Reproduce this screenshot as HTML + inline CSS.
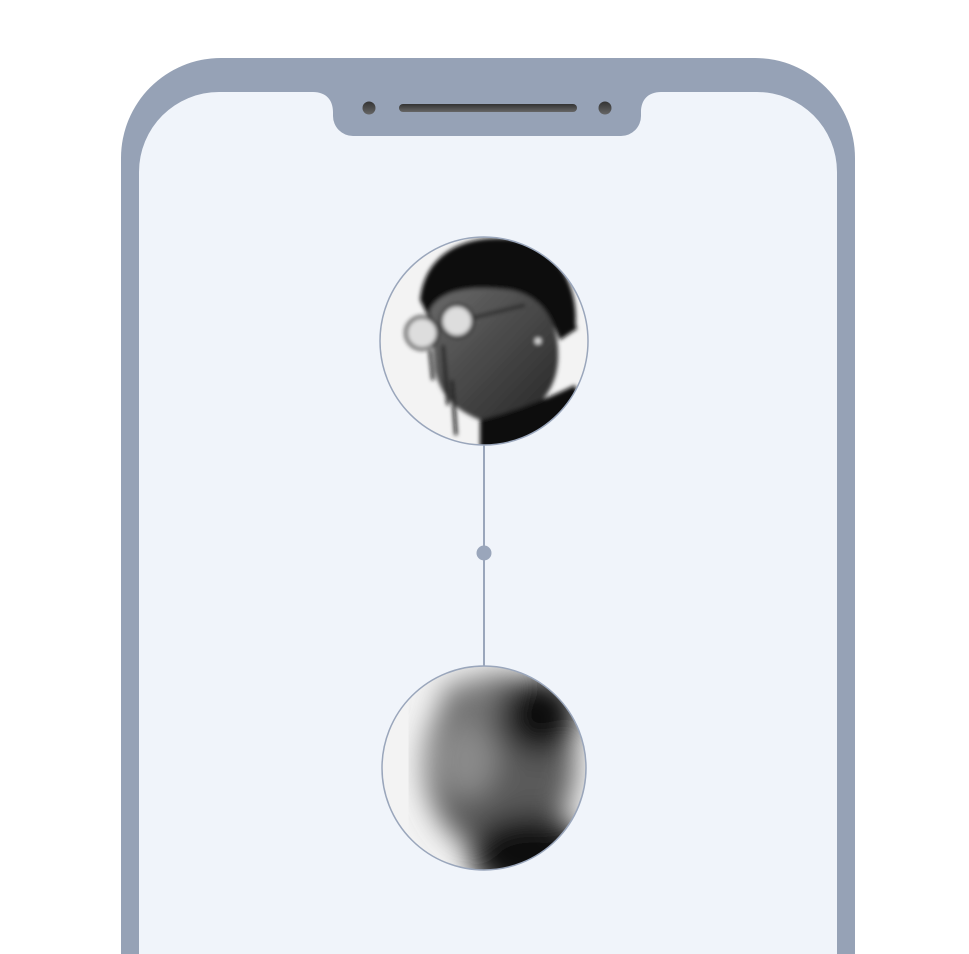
<!DOCTYPE html>
<html><head><style>html,body{margin:0;padding:0;background:#fff;overflow:hidden}svg{display:block}</style></head>
<body>
<svg width="969" height="954" viewBox="0 0 969 954" xmlns="http://www.w3.org/2000/svg">
<defs>
<clipPath id="c1"><circle cx="484" cy="341" r="104"/></clipPath>
<clipPath id="c2"><circle cx="484" cy="768" r="102"/></clipPath>
<filter id="b1"><feGaussianBlur stdDeviation="2"/></filter>
<filter id="b2"><feGaussianBlur stdDeviation="14"/></filter>
<linearGradient id="sp" x1="0" y1="0" x2="0" y2="1"><stop offset="0" stop-color="#333"/><stop offset="1" stop-color="#666"/></linearGradient>
<linearGradient id="face" x1="0" y1="0" x2="1" y2="1"><stop offset="0" stop-color="#6a6a6a"/><stop offset="1" stop-color="#262626"/></linearGradient>
</defs>
<path d="M121 954 V158 A100 100 0 0 1 221 58 H755 A100 100 0 0 1 855 158 V954 Z" fill="#96a2b6"/>
<path d="M139 954 V172 A80 80 0 0 1 219 92 H313 C326 92 333 100 333 112 V116 A20 20 0 0 0 353 136 H621 A20 20 0 0 0 641 116 V112 C641 100 648 92 661 92 H757 A80 80 0 0 1 837 172 V954 Z" fill="#f0f4fa"/>
<circle cx="369" cy="108" r="6.5" fill="url(#sp)"/>
<circle cx="605" cy="108" r="6.5" fill="url(#sp)"/>
<rect x="399" y="104" width="178" height="8" rx="4" fill="url(#sp)"/>
<line x1="484" y1="445" x2="484" y2="667" stroke="#9aa6bb" stroke-width="2"/>
<circle cx="484" cy="553" r="7.5" fill="#9aa6bb"/>
<g clip-path="url(#c1)">
<rect x="370" y="230" width="230" height="230" fill="#f3f3f3"/>
<g filter="url(#b1)">
<path d="M420 300 C425 250 470 232 520 240 C560 250 580 290 575 330 L560 340 C545 300 520 290 480 290 C455 290 440 300 430 320 Z" fill="#111"/>
<path d="M430 310 C440 290 470 285 510 290 C540 295 560 320 558 360 C556 390 540 405 520 420 L480 420 C455 410 440 395 435 370 Z" fill="url(#face)"/>
<path d="M480 420 C520 410 555 395 575 385 L600 460 L480 460 Z" fill="#0a0a0a"/>
<circle cx="422" cy="333" r="16" fill="#ddd" stroke="#222" stroke-width="3"/>
<circle cx="457" cy="321" r="16" fill="#ddd" stroke="#222" stroke-width="3"/>
<line x1="472" y1="318" x2="525" y2="305" stroke="#222" stroke-width="3"/>
<path d="M430 350 L433 380 M443 345 L448 405 M452 380 L456 435" stroke="#111" stroke-width="3" fill="none"/>
<path d="M565 290 L575 330" stroke="#111" stroke-width="4"/>
<circle cx="538" cy="341" r="3" fill="#eee"/>
</g>
</g>
<circle cx="484" cy="341" r="104" fill="none" stroke="#9aa6bb" stroke-width="1.5"/>
<g clip-path="url(#c2)">
<rect x="370" y="650" width="240" height="240" fill="#f3f3f3"/>
<g filter="url(#b2)">
<ellipse cx="500" cy="765" rx="75" ry="90" fill="#5a5a5a"/>
<ellipse cx="540" cy="715" rx="38" ry="38" fill="#111"/>
<ellipse cx="465" cy="760" rx="32" ry="38" fill="#8a8a8a"/>
<ellipse cx="530" cy="855" rx="60" ry="40" fill="#0a0a0a"/>
<ellipse cx="470" cy="700" rx="30" ry="20" fill="#777"/>
</g>
</g>
<circle cx="484" cy="768" r="102" fill="none" stroke="#9aa6bb" stroke-width="1.5"/>
</svg>
</body></html>
